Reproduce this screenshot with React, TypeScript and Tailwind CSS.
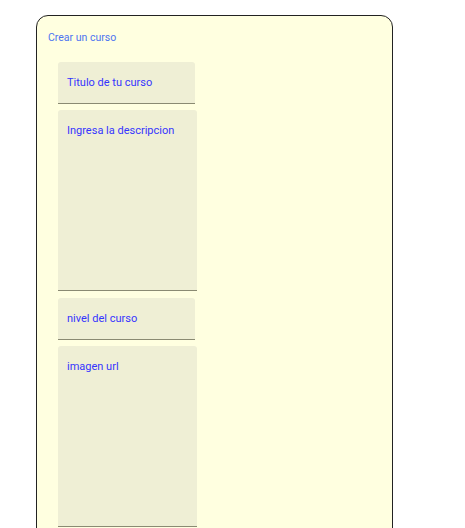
export default function App() {
  return (
    <div className="min-h-screen bg-white pt-[15px] pl-[36px] font-['Roboto','Liberation_Sans',sans-serif]">
      <div className="w-[357px] rounded-[12px] border border-[#222] bg-[#ffffe0] pt-[15px] pb-[40px]">
        <h1 className="pl-[11px] text-[10.5px] leading-[14px] font-normal text-[#4d74f0]">Crear un curso</h1>
        <form className="mt-[17px] ml-[21px] flex flex-col gap-[6px]">
          <input
            type="text"
            placeholder="Titulo de tu curso"
            className="h-[42px] w-[137px] rounded-t-[3px] border-b-[1.5px] border-[#8a8a72] bg-[#efefd5] px-[9px] text-[11px] outline-none placeholder:text-[#3535ff]"
          />
          <textarea
            placeholder="Ingresa la descripcion"
            className="h-[181px] w-[139px] resize-none rounded-t-[3px] border-b-[1.5px] border-[#8a8a72] bg-[#efefd5] px-[9px] pt-[13px] text-[11px] outline-none placeholder:text-[#3535ff]"
          />
          <input
            type="text"
            placeholder="nivel del curso"
            className="mt-[1px] h-[42px] w-[137px] rounded-t-[3px] border-b-[1.5px] border-[#8a8a72] bg-[#efefd5] px-[9px] text-[11px] outline-none placeholder:text-[#3535ff]"
          />
          <textarea
            placeholder="imagen url"
            className="h-[181px] w-[139px] resize-none rounded-t-[3px] border-b-[1.5px] border-[#8a8a72] bg-[#efefd5] px-[9px] pt-[13px] text-[11px] outline-none placeholder:text-[#3535ff]"
          />
        </form>
      </div>
    </div>
  );
}
